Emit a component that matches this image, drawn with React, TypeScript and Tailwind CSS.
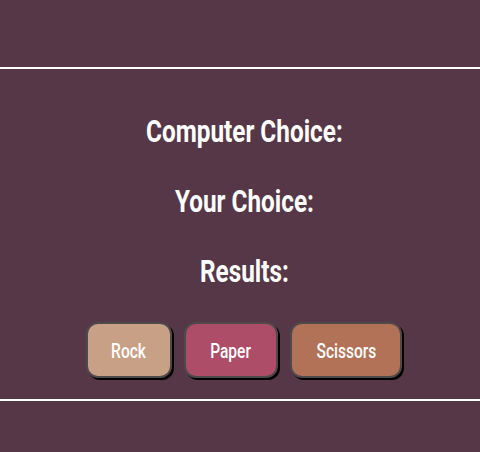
export default function App() {
  const choices = [
    { name: "Rock", color: "bg-[#c8a086]", width: "w-[86px]" },
    { name: "Paper", color: "bg-[#ad4d68]", width: "w-[94px]" },
    { name: "Scissors", color: "bg-[#b27257]", width: "w-[112px]" },
  ];

  const heading = "text-[32px] font-bold leading-[38px] scale-x-[0.76]";

  return (
    <div
      className="w-[480px] h-[452px] bg-[#553747] text-white overflow-hidden"
      style={{ fontFamily: 'Roboto, "Liberation Sans", sans-serif' }}
    >
      <div className="h-[67px]" />
      <div className="h-[2px] bg-white" />

      {/* Game area */}
      <div className="flex flex-col items-center pl-2 pt-[43px]">
        <h2 className={heading}>Computer Choice:</h2>
        <h2 className={`mt-[32px] ${heading}`}>Your Choice:</h2>
        <h2 className={`mt-[32px] ${heading}`}>Results:</h2>

        <div className="mt-[32px] flex gap-3">
          {choices.map((c) => (
            <button
              key={c.name}
              className={`${c.color} ${c.width} h-[56px] flex items-center justify-center rounded-[12px] border-2 border-[#4e4a4c] shadow-[2px_2px_0_#000] text-white`}
            >
              <span className="pt-[3px] text-[21px] font-medium scale-x-[0.74]">{c.name}</span>
            </button>
          ))}
        </div>
      </div>

      <div className="mt-[21px] h-[2px] bg-white" />
    </div>
  );
}
